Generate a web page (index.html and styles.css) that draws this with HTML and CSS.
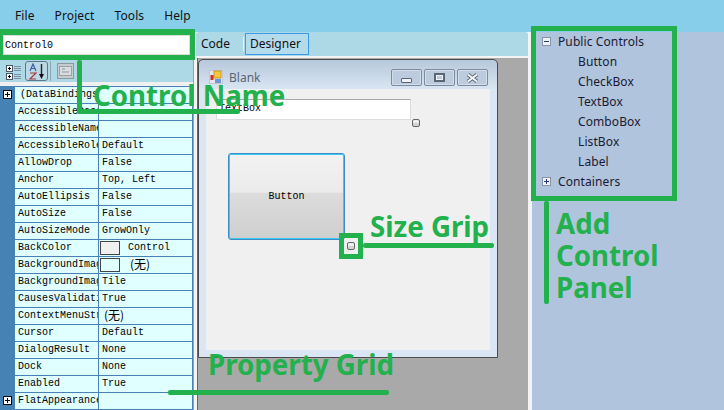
FILE: index.html
```html
<!DOCTYPE html>
<html>
<head>
<meta charset="utf-8">
<title>Form Designer</title>
<link rel="stylesheet" href="styles.css">
</head>
<body>
<header class="menu-bar">
	<span>File</span>
	<span>Project</span>
	<span>Tools</span>
	<span>Help</span>
</header>
<div class="main">
	<aside class="left-col">
		<div class="name-wrap"><input class="name-box" type="text" value="Control0"></div>
		<div class="grid-tools">
			<svg class="tool-icon" width="17" height="18" viewBox="0 0 17 18">
				<rect x="1.500" y="3.500" width="6" height="6" fill="#fff" stroke="#4a5a68"/>
				<path d="M3 6.500h3M4.500 5v3" stroke="#000"/>
				<rect x="1.500" y="11.500" width="6" height="6" fill="#fff" stroke="#4a5a68"/>
				<path d="M3 14.500h3M4.500 13v3" stroke="#000"/>
				<path d="M9 4.500h7M9 6.500h7M9 8.500h7M9 12.500h7M9 14.500h7M9 16.500h7" stroke="#7f8fa0"/>
			</svg>
			<button class="sort-btn">
				<svg width="18" height="17" viewBox="0 0 18 17">
					<path d="M2 8 5 1l3 7M3.200 5.500h3.600" fill="none" stroke="#3a5fa8" stroke-width="1.200"/>
					<path d="M2 10h6l-6 6h6" fill="none" stroke="#a83a3a" stroke-width="1.200"/>
					<path d="M13.500 1v11" stroke="#222" stroke-width="1.400"/>
					<path d="M11 11h5l-2.500 5z" fill="#111"/>
				</svg>
			</button>
			<i class="tool-sep"></i>
			<svg class="tool-icon" width="17" height="16" viewBox="0 0 17 16">
				<rect x="0.500" y="0.500" width="16" height="15" fill="#c4ccd0" stroke="#8f989c"/>
				<rect x="2.500" y="3.500" width="12" height="9" fill="#d8dcde" stroke="#9aa2a6"/>
				<path d="M5 6h3M5 9h7" stroke="#8f989c"/>
			</svg>
		</div>
		<div class="prop-grid">
			<div class="prop-row"><span class="gutter"><b class="plus"></b></span><span class="prop-name indent">(DataBindings)</span><span class="prop-val"></span></div>
			<div class="prop-row"><span class="gutter"></span><span class="prop-name">AccessibleDescription</span><span class="prop-val"></span></div>
			<div class="prop-row"><span class="gutter"></span><span class="prop-name">AccessibleName</span><span class="prop-val"></span></div>
			<div class="prop-row"><span class="gutter"></span><span class="prop-name">AccessibleRole</span><span class="prop-val">Default</span></div>
			<div class="prop-row"><span class="gutter"></span><span class="prop-name">AllowDrop</span><span class="prop-val">False</span></div>
			<div class="prop-row"><span class="gutter"></span><span class="prop-name">Anchor</span><span class="prop-val">Top, Left</span></div>
			<div class="prop-row"><span class="gutter"></span><span class="prop-name">AutoEllipsis</span><span class="prop-val">False</span></div>
			<div class="prop-row"><span class="gutter"></span><span class="prop-name">AutoSize</span><span class="prop-val">False</span></div>
			<div class="prop-row"><span class="gutter"></span><span class="prop-name">AutoSizeMode</span><span class="prop-val">GrowOnly</span></div>
			<div class="prop-row"><span class="gutter"></span><span class="prop-name">BackColor</span><span class="prop-val swatch-val"><i class="swatch grey"></i>Control</span></div>
			<div class="prop-row"><span class="gutter"></span><span class="prop-name">BackgroundImage</span><span class="prop-val swatch-val"><i class="swatch"></i><span class="none-val">(无)</span></span></div>
			<div class="prop-row"><span class="gutter"></span><span class="prop-name">BackgroundImageLayout</span><span class="prop-val">Tile</span></div>
			<div class="prop-row"><span class="gutter"></span><span class="prop-name">CausesValidation</span><span class="prop-val">True</span></div>
			<div class="prop-row"><span class="gutter"></span><span class="prop-name">ContextMenuStrip</span><span class="prop-val none-cell"><span class="none-val">(无)</span></span></div>
			<div class="prop-row"><span class="gutter"></span><span class="prop-name">Cursor</span><span class="prop-val">Default</span></div>
			<div class="prop-row"><span class="gutter"></span><span class="prop-name">DialogResult</span><span class="prop-val">None</span></div>
			<div class="prop-row"><span class="gutter"></span><span class="prop-name">Dock</span><span class="prop-val">None</span></div>
			<div class="prop-row"><span class="gutter"></span><span class="prop-name">Enabled</span><span class="prop-val">True</span></div>
			<div class="prop-row"><span class="gutter"><b class="plus"></b></span><span class="prop-name">FlatAppearance</span><span class="prop-val"></span></div>
		</div>
	</aside>
	<section class="center-col">
		<div class="tabs">
			<span class="tab code">Code</span>
			<i class="tab-sep"></i>
			<span class="tab active">Designer</span>
		</div>
		<div class="designer">
			<div class="form-window">
				<div class="form-title">
					<svg width="14" height="14" viewBox="0 0 14 14">
						<rect x="0.500" y="0.500" width="13" height="13" fill="#e4e6ea" stroke="#c4c8cc"/>
						<rect x="5" y="1" width="7" height="7" fill="#f5c842" stroke="#b98a1e" stroke-width="0.800"/>
						<rect x="1.500" y="5" width="3" height="5" fill="#c8322a"/>
						<rect x="6" y="9" width="6" height="4" fill="#6d97d8"/>
					</svg>
					<span class="form-caption">Blank</span>
					<div class="win-btns">
						<span class="win-btn"><i class="min-glyph"></i></span>
						<span class="win-btn"><i class="max-glyph"></i></span>
						<span class="win-btn">
							<svg width="13" height="10" viewBox="0 0 13 10">
								<path d="M2 1.500 11 8.500M11 1.500 2 8.500" stroke="#5b6675" stroke-width="3.800"/>
								<path d="M2 1.500 11 8.500M11 1.500 2 8.500" stroke="#f4f6f8" stroke-width="2"/>
							</svg>
						</span>
					</div>
				</div>
				<div class="form-client">
					<div class="ctl-textbox">TextBox</div>
					<i class="grip grip-text"></i>
					<div class="ctl-button">Button</div>
					<i class="grip grip-btn"></i>
				</div>
			</div>
		</div>
	</section>
	<aside class="right-col">
		<ul class="tree">
			<li><i class="expander open"></i>Public Controls</li>
			<li class="leaf">Button</li>
			<li class="leaf">CheckBox</li>
			<li class="leaf">TextBox</li>
			<li class="leaf">ComboBox</li>
			<li class="leaf">ListBox</li>
			<li class="leaf">Label</li>
			<li><i class="expander"></i>Containers</li>
		</ul>
	</aside>
</div>

<!-- green notes drawn over the screenshot -->
<div class="note-box box-name"></div>
<div class="note-line line-name-v"></div>
<div class="note-line line-name-h"></div>
<div class="note-text text-name">Control Name</div>
<div class="note-box box-panel"></div>
<div class="note-line line-panel"></div>
<div class="note-text text-panel">Add<br>Control<br>Panel</div>
<div class="note-box box-grip"></div>
<div class="note-line line-grip"></div>
<div class="note-text text-grip">Size Grip</div>
<div class="note-line line-prop"></div>
<div class="note-text text-prop">Property Grid</div>
</body>
</html>
```

FILE: styles.css
```css
html, body{
	margin: 0;
	padding: 0;
}
body{
	position: relative;
	width: 724px;
	height: 410px;
	overflow: hidden;
	font-family: 'Noto Sans', 'Open Sans', sans-serif;
	font-size: 12px;
	color: #111;
	background-color: #b0c4de;
}
.menu-bar{
	display: flex;
	height: 32px;
	padding: 0 0 2px 15px;
	box-sizing: border-box;
	align-items: center;
	gap: 20px;
	letter-spacing: .1px;
	background-color: #87ceeb;
}
.main{
	display: flex;
	height: 378px;
}

/* left column */
.left-col{
	width: 193px;
	flex: none;
	background-color: #f0f0f0;
	border-right: 1px solid #a0a0a0;
}
.name-wrap{
	height: 28px;
	padding: 3px 3px 0;
	box-sizing: border-box;
}
.name-box{
	display: block;
	width: 187px;
	height: 20px;
	padding: 0 1px;
	box-sizing: border-box;
	border: 1px solid #ddd;
	font-family: 'Liberation Mono', monospace;
	font-size: 10px;
	color: #000;
	background-color: #fff;
}
.grid-tools{
	display: flex;
	align-items: center;
	height: 22px;
	padding-left: 5px;
	background-color: #add8e6;
}
.tool-icon{
	flex: none;
}
.sort-btn{
	display: flex;
	align-items: center;
	justify-content: center;
	width: 23px;
	height: 20px;
	margin-left: 3px;
	padding: 0;
	border: 1px solid #5a7a8a;
	border-radius: 3px;
	background-color: #bcd8e4;
}
.tool-sep{
	width: 1px;
	height: 20px;
	margin: 0 6px 0 2px;
	background-color: #8fa8b2;
}
.prop-grid{
	margin-top: 4px;
	border-top: 1px solid #4682b4;
	width: 193px;
	box-sizing: border-box;
	border-right: 1px solid #4682b4;
	background-color: #e0ffff;
}
.prop-row{
	display: flex;
	height: 17px;
	box-sizing: border-box;
	border-bottom: 1px solid #4682b4;
	font-family: 'Liberation Mono', monospace;
	font-size: 10px;
	line-height: 16px;
	color: #000;
}
.gutter{
	width: 15px;
	flex: none;
	margin-bottom: -1px;
	background-color: #4682b4;
}
.plus{
	display: block;
	width: 7px;
	height: 7px;
	margin: 3px 0 0 3px;
	border: 1px solid #000;
	background: linear-gradient(#000, #000) center / 5px 1px no-repeat, linear-gradient(#000, #000) center / 1px 5px no-repeat, #fff;
}
.prop-name{
	width: 84px;
	flex: none;
	padding-left: 3px;
	box-sizing: border-box;
	overflow: hidden;
	white-space: nowrap;
	border-right: 1px solid #4682b4;
}
.prop-name.indent{
	padding-left: 5px;
}
.prop-val{
	flex: 1;
	padding-left: 3px;
	white-space: nowrap;
	overflow: hidden;
}
.swatch-val, .none-cell{
	display: flex;
	align-items: center;
}
.swatch-val{
	padding-left: 1px;
}
.swatch{
	width: 18px;
	height: 12px;
	margin-right: 8px;
	border: 1px solid #444;
}
.swatch.grey{
	background-color: #f0f0f0;
}
.none-val{
	margin-top: -2px;
	font-family: 'Noto Sans CJK SC', sans-serif;
	font-size: 12px;
	line-height: 16px;
	padding-left: 2px;
}

/* center column */
.center-col{
	width: 338px;
	flex: none;
	display: flex;
	flex-direction: column;
	box-sizing: border-box;
	background-color: #f4f4f4;
	border-left: 2px solid #f4f4f4;
	border-right: 4px solid #f4f4f4;
}
.tabs{
	display: flex;
	align-items: center;
	height: 24px;
	flex: none;
	box-sizing: border-box;
	border-radius: 3px 3px 0 0;
	background-color: #add8e6;
}
.tab{
	padding: 1px 7px 2px 4px;
	border: 1px solid transparent;
}
.tab.code{
	width: 47px;
	box-sizing: border-box;
}
.tab.active{
	border-color: #3c9be8;
	background-color: #b4dbec;
}
.tab-sep{
	width: 1px;
	height: 14px;
	margin-right: 1px;
	background-color: #e4f2f6;
}
.designer{
	flex: 1;
	margin: 2px 0 0 1px;
	padding-top: 1px;
	border-left: 1px solid #666;
	background-color: #a9a9a9;
}
.form-window{
	display: flex;
	flex-direction: column;
	width: 300px;
	height: 299px;
	box-sizing: border-box;
	border: 1px solid #4c4c4c;
	border-radius: 5px 5px 0 0;
	background: linear-gradient(#b7c8dc, #dae6f3 30px);
}
.form-title{
	display: flex;
	align-items: center;
	height: 29px;
	flex: none;
	padding: 5px 0 0 10px;
	box-sizing: border-box;
}
.form-caption{
	margin-left: 6px;
	color: #5a6675;
}
.win-btns{
	display: flex;
	gap: 2px;
	align-self: flex-start;
	margin: 4px 9px 0 auto;
}
.win-btn{
	display: flex;
	align-items: center;
	justify-content: center;
	width: 31px;
	height: 17px;
	box-sizing: border-box;
	border: 1px solid #7d8ba0;
	border-radius: 2px;
	box-shadow: inset 0 0 0 1px #d4deea;
	background-color: #bccbde;
}
.min-glyph{
	width: 9px;
	height: 3px;
	margin-top: 5px;
	border: 1px solid #5b6675;
	border-radius: 1px;
	background-color: #eef1f5;
}
.max-glyph{
	width: 7px;
	height: 5px;
	border: 2px solid #5b6675;
	box-shadow: inset 0 0 0 1px #eef1f5;
	background-color: #bccbde;
}
.form-client{
	position: relative;
	flex: none;
	width: 284px;
	height: 261px;
	margin-left: 7px;
	background-color: #f0f0f0;
}
.ctl-textbox{
	position: absolute;
	left: 10px;
	top: 10px;
	width: 195px;
	height: 21px;
	padding-left: 2px;
	box-sizing: border-box;
	border: 1px solid #ddd;
	border-top-color: #aaa;
	font-family: 'Liberation Mono', monospace;
	font-size: 10px;
	line-height: 17px;
	color: #000;
	background-color: #fff;
}
.ctl-button{
	position: absolute;
	left: 22px;
	top: 64px;
	width: 117px;
	height: 87px;
	box-sizing: border-box;
	border: 1px solid #3c8cc8;
	border-radius: 3px;
	box-shadow: inset 0 0 0 1px #3fc8f0;
	font-family: 'Liberation Mono', monospace;
	font-size: 10px;
	line-height: 85px;
	text-align: center;
	color: #000;
	background: linear-gradient(#f2f2f2, #ebebeb 45%, #dcdcdc 46%, #cfcfcf);
}
.grip{
	position: absolute;
	width: 8px;
	height: 8px;
	box-sizing: border-box;
	border: 1px solid #666;
	border-radius: 2px;
	background: linear-gradient(#eee 50%, #d4d4d4 50%);
}
.grip-text{
	left: 206px;
	top: 30px;
}
.grip-btn{
	left: 141px;
	top: 153px;
}

/* right column */
.right-col{
	flex: 1;
	background-color: #b0c4de;
}
.tree{
	margin: 0;
	padding: 0;
	list-style: none;
	letter-spacing: .1px;
	color: #1a1a30;
}
.tree li{
	display: flex;
	align-items: center;
	height: 20px;
	padding-left: 10px;
	position: relative;
	top: -1px;
}
.tree li.leaf{
	padding-left: 46px;
}
.expander{
	width: 7px;
	height: 7px;
	margin-right: 7px;
	border: 1px solid #8a94a4;
	background: linear-gradient(#2a3a78, #2a3a78) center / 5px 1px no-repeat, linear-gradient(#2a3a78, #2a3a78) center / 1px 5px no-repeat, #eef1f6;
}
.expander.open{
	background: linear-gradient(#2a3a78, #2a3a78) center / 5px 1px no-repeat, #eef1f6;
}

/* green notes */
.note-box{
	position: absolute;
	box-sizing: border-box;
	border: 5px solid #22b14c;
}
.note-line{
	position: absolute;
	background-color: #22b14c;
	border-radius: 2px;
}
.note-text{
	position: absolute;
	font-family: 'Noto Sans', sans-serif;
	font-weight: 700;
	font-size: 27.700px;
	line-height: 32px;
	color: #22b14c;
	white-space: nowrap;
}
.box-name{
	left: -2px;
	top: 29px;
	width: 197px;
	height: 31px;
	border-top-width: 6px;
}
.line-name-v{
	left: 77px;
	top: 60px;
	width: 5px;
	height: 54px;
}
.line-name-h{
	left: 77px;
	top: 109px;
	width: 163px;
	height: 5px;
}
.text-name{
	left: 93px;
	top: 79px;
}
.box-panel{
	left: 531px;
	top: 26px;
	width: 146px;
	height: 175px;
}
.line-panel{
	left: 544px;
	top: 201px;
	width: 5px;
	height: 103px;
}
.text-panel{
	left: 556px;
	top: 207px;
}
.box-grip{
	left: 339px;
	top: 233px;
	width: 24px;
	height: 26px;
}
.line-grip{
	left: 363px;
	top: 243px;
	width: 131px;
	height: 5px;
}
.text-grip{
	left: 370px;
	top: 210px;
}
.line-prop{
	left: 168px;
	top: 390px;
	width: 221px;
	height: 5px;
}
.text-prop{
	left: 208px;
	top: 348px;
}
```
